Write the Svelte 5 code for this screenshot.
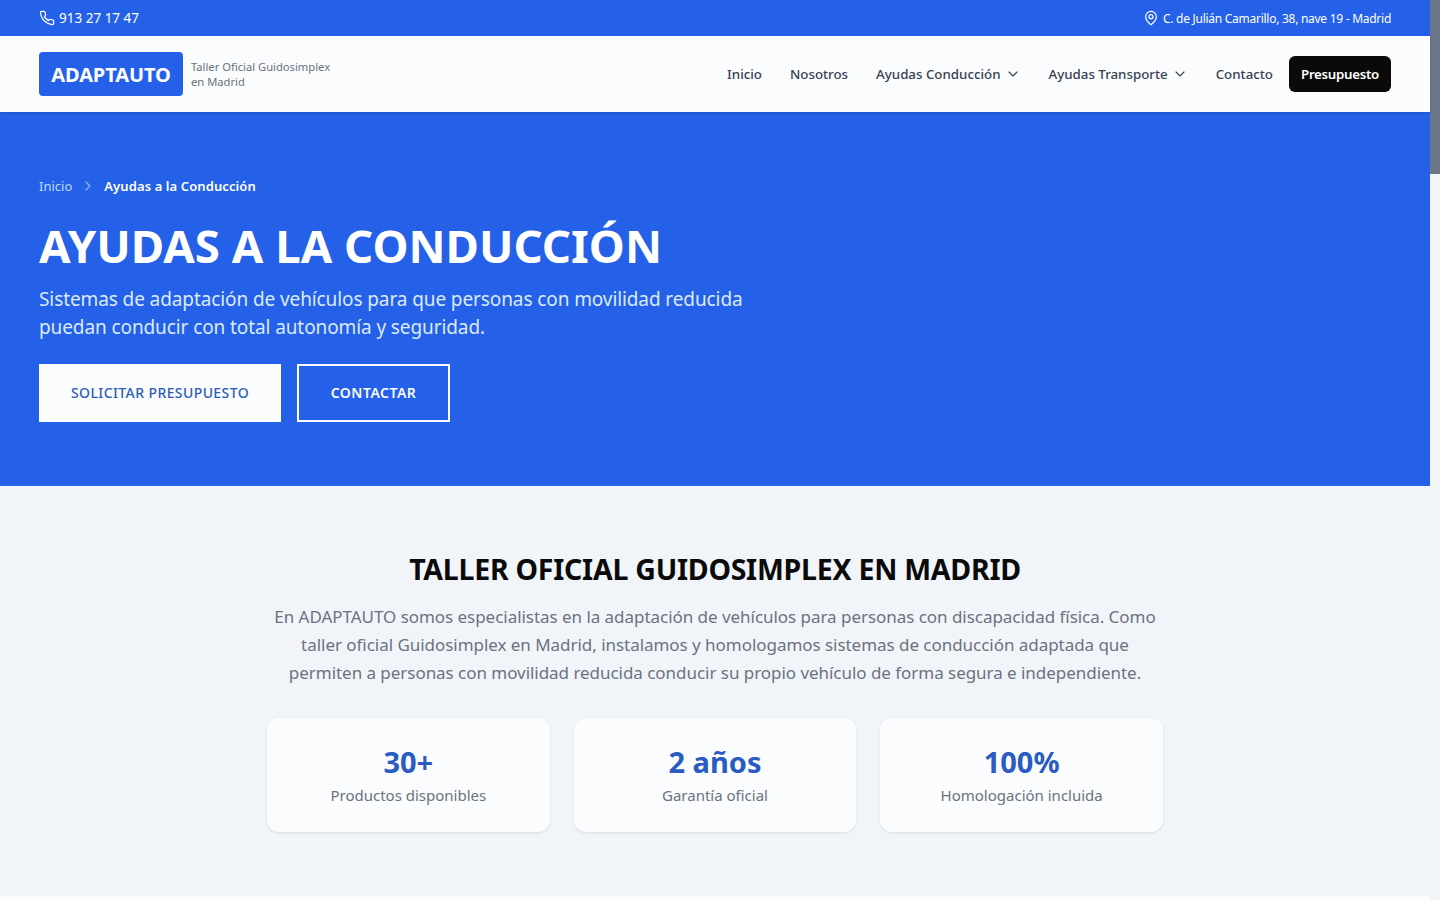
<script>
  const stats = [
    { value: '30+', label: 'Productos disponibles' },
    { value: '2 años', label: 'Garantía oficial' },
    { value: '100%', label: 'Homologación incluida' }
  ];
</script>

<div class="viewport">
  <div class="page">
    <div class="topbar">
      <a class="tel">
        <svg width="16" height="16" viewBox="0 0 24 24" fill="none" stroke="currentColor" stroke-width="1.8" stroke-linecap="round" stroke-linejoin="round"><path d="M22 16.92v3a2 2 0 0 1-2.18 2 19.79 19.79 0 0 1-8.63-3.07 19.5 19.5 0 0 1-6-6 19.79 19.79 0 0 1-3.07-8.67A2 2 0 0 1 4.11 2h3a2 2 0 0 1 2 1.72c.13.96.36 1.9.7 2.81a2 2 0 0 1-.45 2.11L8.09 9.91a16 16 0 0 0 6 6l1.27-1.27a2 2 0 0 1 2.11-.45c.91.34 1.85.57 2.81.7A2 2 0 0 1 22 16.92z"/></svg>
        <span>913 27 17 47</span>
      </a>
      <div class="addr">
        <svg width="16" height="16" viewBox="0 0 24 24" fill="none" stroke="currentColor" stroke-width="1.8" stroke-linecap="round" stroke-linejoin="round"><path d="M20 10c0 6-8 12-8 12s-8-6-8-12a8 8 0 0 1 16 0z"/><circle cx="12" cy="10" r="3"/></svg>
        <span>C. de Julián Camarillo, 38, nave 19 - Madrid</span>
      </div>
    </div>

    <header class="nav">
      <div class="brand">
        <div class="logo">ADAPTAUTO</div>
        <div class="tag">Taller Oficial Guidosimplex<br />en Madrid</div>
      </div>
      <nav class="links">
        <a>Inicio</a>
        <a>Nosotros</a>
        <a class="drop">Ayudas Conducción
          <svg width="16" height="16" viewBox="0 0 24 24" fill="none" stroke="currentColor" stroke-width="1.7" stroke-linecap="round" stroke-linejoin="round"><path d="m6 9 6 6 6-6"/></svg>
        </a>
        <a class="drop">Ayudas Transporte
          <svg width="16" height="16" viewBox="0 0 24 24" fill="none" stroke="currentColor" stroke-width="1.7" stroke-linecap="round" stroke-linejoin="round"><path d="m6 9 6 6 6-6"/></svg>
        </a>
        <a>Contacto</a>
        <a class="quote">Presupuesto</a>
      </nav>
    </header>

    <section class="hero">
      <div class="crumbs">
        <span class="c1">Inicio</span>
        <svg width="16" height="16" viewBox="0 0 24 24" fill="none" stroke="currentColor" stroke-width="1.6" stroke-linecap="round" stroke-linejoin="round"><path d="m9 18 6-6-6-6"/></svg>
        <span class="c2">Ayudas a la Conducción</span>
      </div>
      <h1>AYUDAS A LA CONDUCCIÓN</h1>
      <p>Sistemas de adaptación de vehículos para que personas con movilidad reducida puedan conducir con total autonomía y seguridad.</p>
      <div class="cta">
        <a class="btn solid">SOLICITAR PRESUPUESTO</a>
        <a class="btn outline">CONTACTAR</a>
      </div>
    </section>

    <section class="intro">
      <h2>TALLER OFICIAL GUIDOSIMPLEX EN MADRID</h2>
      <p>En ADAPTAUTO somos especialistas en la adaptación de vehículos para personas con discapacidad física. Como taller oficial Guidosimplex en Madrid, instalamos y homologamos sistemas de conducción adaptada que permiten a personas con movilidad reducida conducir su propio vehículo de forma segura e independiente.</p>
      <div class="stats">
        {#each stats as s}
          <div class="card">
            <div class="val">{s.value}</div>
            <div class="lab">{s.label}</div>
          </div>
        {/each}
      </div>
    </section>
    <div class="next"></div>
  </div>
  <div class="scrollbar"><div class="thumb"></div></div>
</div>

<style>
  :global(body) {
    margin: 0;
    overflow: hidden;
    font-family: "Noto Sans", "Open Sans", sans-serif;
  }
  .viewport {
    display: flex;
    height: 900px;
    overflow: hidden;
  }
  .page {
    flex: 1;
    min-width: 0;
    background: #fafcfe;
  }
  .scrollbar {
    width: 10px;
    background: #f1f5f9;
  }
  .thumb {
    height: 174px;
    background: #6b7688;
  }
  .topbar {
    height: 36px;
    background: #2461e8;
    color: #fff;
    display: flex;
    align-items: center;
    justify-content: space-between;
    padding: 0 39px;
    font-size: 12px;
  }
  .tel, .addr {
    display: flex;
    align-items: center;
    gap: 4px;
  }
  .tel { font-size: 13.5px; }
  .addr { letter-spacing: -0.27px; }
  .nav {
    height: 76px;
    box-sizing: border-box;
    background: #fafcfe;
    display: flex;
    align-items: center;
    justify-content: space-between;
    padding: 0 39px;
    box-shadow: 0 1px 3px rgba(0, 0, 0, .15);
    position: relative;
  }
  .brand {
    display: flex;
    align-items: center;
    gap: 8px;
  }
  .logo {
    width: 144px;
    height: 44px;
    display: flex;
    align-items: center;
    justify-content: center;
    background: #2461e8;
    color: #fff;
    border-radius: 4px;
    font-size: 20px;
    font-weight: 700;
    letter-spacing: -0.1px;
  }
  .tag {
    font-size: 11.2px;
    line-height: 15px;
    color: #6b7280;
  }
  .links {
    display: flex;
    align-items: center;
    font-size: 13.3px;
    font-weight: 500;
    color: #374151;
  }
  .links a {
    margin-left: 28px;
    display: flex;
    align-items: center;
    gap: 4px;
  }
  .links .quote {
    margin-left: 16px;
    width: 102px;
    height: 36px;
    justify-content: center;
    background: #0a0a0a;
    color: #fff;
    border-radius: 6px;
    font-weight: 600;
    letter-spacing: -0.3px;
  }
  .hero {
    height: 374px;
    box-sizing: border-box;
    background: #2461e8;
    padding: 64px 39px 0;
    color: #fff;
  }
  .crumbs {
    display: flex;
    align-items: center;
    gap: 8px;
    height: 20px;
    font-size: 13px;
    color: #bfdbfe;
  }
  .crumbs svg { opacity: .75; }
  .c2 {
    color: #fff;
    font-weight: 600;
    letter-spacing: 0.1px;
  }
  h1 {
    margin: 19px 0 0;
    font-size: 45.6px;
    line-height: 60px;
    font-weight: 700;
  }
  .hero p {
    margin: 10px 0 0;
    max-width: 768px;
    font-size: 19px;
    line-height: 28px;
    letter-spacing: -0.1px;
    color: #dbeafe;
  }
  .cta {
    display: flex;
    gap: 16px;
    margin-top: 23px;
  }
  .btn {
    height: 58px;
    box-sizing: border-box;
    padding-bottom: 2px;
    display: flex;
    align-items: center;
    justify-content: center;
    font-size: 14px;
    font-weight: 600;
    letter-spacing: 0.5px;
  }
  .solid {
    width: 242px;
    background: #fafcfe;
    color: #2d5cb5;
    font-weight: 500;
    letter-spacing: 0.4px;
  }
  .outline {
    width: 153px;
    border: 2px solid #fafcfe;
    color: #fafcfe;
  }
  .intro {
    height: 410px;
    box-sizing: border-box;
    background: #f1f5f9;
    padding-top: 64px;
    text-align: center;
  }
  h2 {
    margin: 0;
    font-size: 28.5px;
    line-height: 38px;
    font-weight: 700;
    color: #0a0a0a;
    letter-spacing: -0.25px;
  }
  .intro p {
    margin: 15px auto 0;
    max-width: 896px;
    font-size: 17px;
    line-height: 28px;
    letter-spacing: -0.04px;
    color: #6b7280;
  }
  .stats {
    display: grid;
    grid-template-columns: repeat(3, 1fr);
    gap: 24px;
    width: 896px;
    margin: 31px auto 0;
  }
  .card {
    height: 114px;
    box-sizing: border-box;
    padding-top: 26px;
    background: #fafcfe;
    border-radius: 12px;
    box-shadow: 0 1px 3px rgba(0, 0, 0, .1);
  }
  .val {
    font-size: 29px;
    line-height: 36px;
    font-weight: 700;
    color: #2a5bc0;
  }
  .lab {
    margin-top: 3px;
    font-size: 15px;
    line-height: 24px;
    color: #6b7280;
  }
</style>
